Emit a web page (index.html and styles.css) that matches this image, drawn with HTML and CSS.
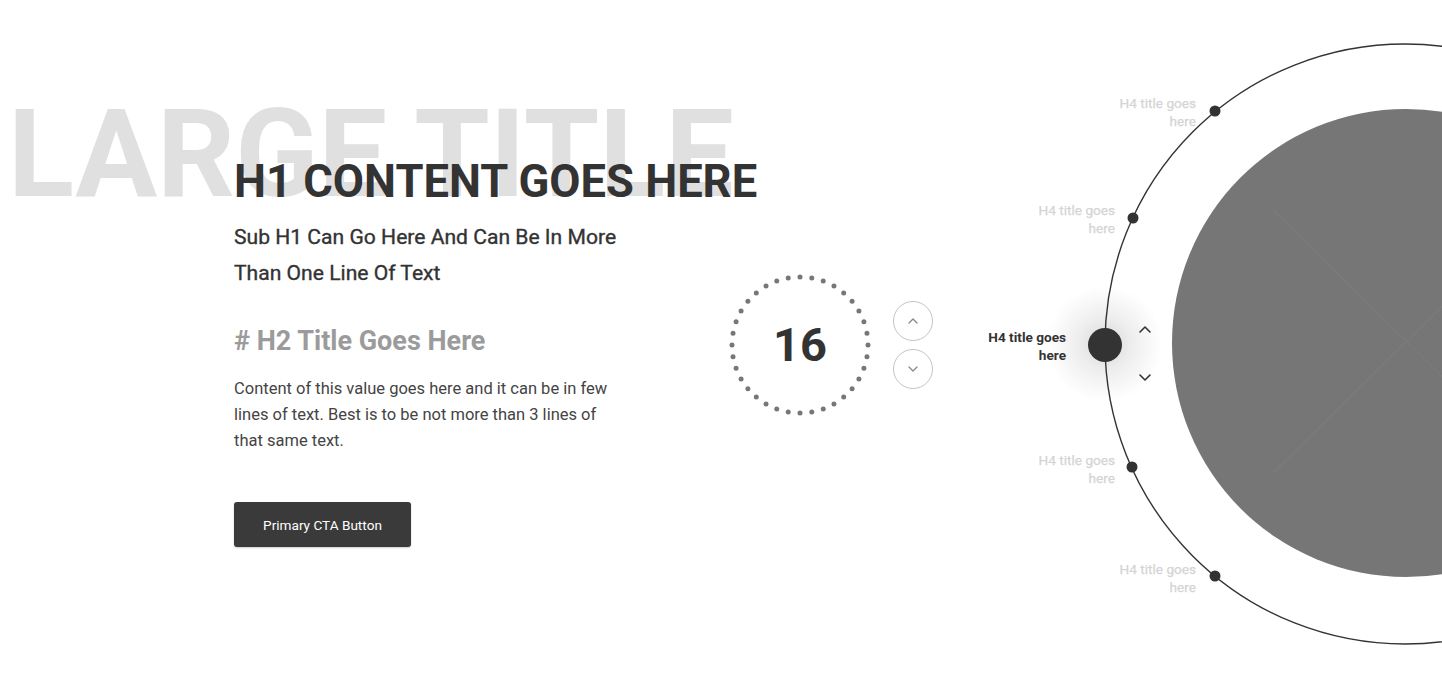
FILE: index.html
```html
<!DOCTYPE html>
<html lang="en">
<head>
<meta charset="utf-8">
<title>Hero</title>
<link rel="stylesheet" href="styles.css">
</head>
<body>
<section class="hero">
  <div class="bg-title">LARGE TITLE</div>
  <div class="content">
    <h1 class="h1">H1 CONTENT GOES HERE</h1>
    <p class="sub">Sub H1 Can Go Here And Can Be In More Than One Line Of Text</p>
    <h2 class="h2"># H2 Title Goes Here</h2>
    <p class="text">Content of this value goes here and it can be in few lines of text. Best is to be not more than 3 lines of that same text.</p>
    <button class="btn">Primary CTA Button</button>
  </div>
  <div class="counter">
    <div class="dial">
      <svg class="dial-dots" width="142" height="142" viewBox="0 0 142 142">
        <circle cx="71" cy="71" r="68" pathLength="36" fill="none" stroke="#777" stroke-width="5" stroke-linecap="round" stroke-dasharray="0 1"/>
      </svg>
      <span class="dial-num">16</span>
    </div>
    <div class="steps">
      <button class="step"><svg width="12" height="8" viewBox="0 0 12 8"><path d="M2 6 L6 2 L10 6" fill="none" stroke="#888" stroke-width="1.3" stroke-linecap="round" stroke-linejoin="round"/></svg></button>
      <button class="step"><svg width="12" height="8" viewBox="0 0 12 8"><path d="M2 2 L6 6 L10 2" fill="none" stroke="#888" stroke-width="1.3" stroke-linecap="round" stroke-linejoin="round"/></svg></button>
    </div>
  </div>
  <div class="orbit">
    <svg class="orbit-svg" width="509" height="689" viewBox="0 0 509 689">
      <defs>
        <radialGradient id="glow">
          <stop offset="0" stop-color="#000" stop-opacity="0.16"/>
          <stop offset="0.45" stop-color="#000" stop-opacity="0.07"/>
          <stop offset="1" stop-color="#000" stop-opacity="0"/>
        </radialGradient>
        <clipPath id="inner"><circle cx="473" cy="343" r="234"/></clipPath>
      </defs>
      <circle cx="473" cy="343" r="234" fill="#767676"/>
      <g clip-path="url(#inner)" stroke="#7c7c7c" stroke-width="1.2">
        <line x1="340" y1="210" x2="607" y2="473"/>
        <line x1="340" y1="473" x2="607" y2="210"/>
      </g>
      <circle cx="172" cy="344" r="58" fill="url(#glow)"/>
      <circle cx="472" cy="344" r="300" fill="none" stroke="#333" stroke-width="1.4"/>
      <circle cx="282" cy="111" r="5.5" fill="#333"/>
      <circle cx="200" cy="218" r="5.5" fill="#333"/>
      <circle cx="172" cy="345" r="17" fill="#333"/>
      <circle cx="199" cy="467" r="5.5" fill="#333"/>
      <circle cx="282" cy="576" r="5.5" fill="#333"/>
      <path d="M207 332 L212 327 L217 332" fill="none" stroke="#333" stroke-width="1.6" stroke-linecap="round" stroke-linejoin="round"/>
      <path d="M207 375 L212 380 L217 375" fill="none" stroke="#333" stroke-width="1.6" stroke-linecap="round" stroke-linejoin="round"/>
      <text class="lbl" x="263" y="108"><tspan x="263">H4 title goes</tspan><tspan x="263" dy="18">here</tspan></text>
      <text class="lbl" x="182" y="215"><tspan x="182">H4 title goes</tspan><tspan x="182" dy="18">here</tspan></text>
      <text class="lbl lbl-active" x="133" y="342"><tspan x="133">H4 title goes</tspan><tspan x="133" dy="18">here</tspan></text>
      <text class="lbl" x="182" y="465"><tspan x="182">H4 title goes</tspan><tspan x="182" dy="18">here</tspan></text>
      <text class="lbl" x="263" y="574"><tspan x="263">H4 title goes</tspan><tspan x="263" dy="18">here</tspan></text>
    </svg>
  </div>
</section>
</body>
</html>
```

FILE: styles.css
```css
* { box-sizing: border-box; }
html, body { margin: 0; padding: 0; background: #fff; }
body { font-family: Roboto, "Liberation Sans", Arial, sans-serif; color: #333; }

.hero {
  position: relative;
  display: flex;
  height: 689px;
  width: 1442px;
  overflow: hidden;
}

.bg-title {
  position: absolute;
  left: 8px;
  top: 94px;
  font-size: 122px;
  line-height: 122px;
  font-weight: 700;
  color: #e0e0e0;
  white-space: nowrap;
  z-index: 0;
}

.content {
  position: relative;
  z-index: 1;
  margin-left: 234px;
  width: 495px;
  padding-top: 154px;
  display: flex;
  flex-direction: column;
  align-items: flex-start;
}

.h1 {
  margin: 0;
  font-size: 45.3px;
  line-height: 56px;
  font-weight: 700;
  color: #333;
  white-space: nowrap;
}

.sub {
  margin: 9px 0 0;
  width: 410px;
  font-size: 21.1px;
  line-height: 36px;
  font-weight: 400;
  -webkit-text-stroke: 0.35px #333;
  color: #333;
}

.h2 {
  margin: 32px 0 0;
  font-size: 27px;
  line-height: 36px;
  font-weight: 700;
  color: #9b9b9b;
}

.text {
  margin: 17px 0 0;
  width: 392px;
  font-size: 16.5px;
  line-height: 26px;
  color: #444;
}

.btn {
  margin-top: 48px;
  width: 177px;
  height: 45px;
  border: none;
  border-radius: 3px;
  background: #3a3a3a;
  color: #fff;
  font-family: inherit;
  font-size: 13.6px;
  box-shadow: 0 1px 2px rgba(0,0,0,0.2);
}

.counter {
  align-self: center;
  display: flex;
  align-items: center;
  gap: 22px;
  width: 204px;
}

.dial {
  position: relative;
  width: 142px;
  height: 142px;
  display: flex;
  align-items: center;
  justify-content: center;
}

.dial-dots { position: absolute; left: 0; top: 0; }

.dial-num {
  font-size: 47px;
  font-weight: 700;
  color: #333;
  line-height: 1;
}

.steps {
  display: flex;
  flex-direction: column;
  gap: 8px;
}

.step {
  width: 40px;
  height: 40px;
  padding: 0;
  border: 1px solid #c4c4c4;
  border-radius: 50%;
  background: #fff;
  display: flex;
  align-items: center;
  justify-content: center;
}

.orbit {
  position: relative;
  flex: 1;
}

.orbit-svg { position: absolute; left: 0; top: 0; overflow: visible; }

.lbl {
  font-family: Roboto, "Liberation Sans", Arial, sans-serif;
  font-size: 13.6px;
  font-weight: 400;
  fill: #d4d4d4;
  stroke: #d4d4d4;
  stroke-width: 0.25px;
  text-anchor: end;
}

.lbl-active { fill: #333; stroke: none; font-weight: 700; }
```
